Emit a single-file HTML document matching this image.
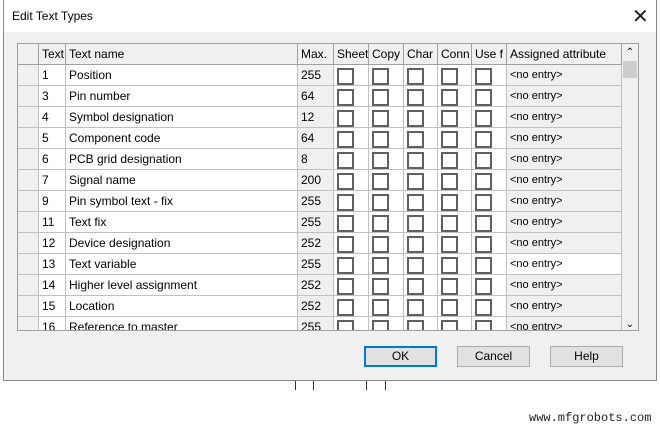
<!DOCTYPE html>
<html><head><style>
body{margin:0;width:660px;height:430px;background:#fff;position:relative;overflow:hidden;font-family:"Liberation Sans",sans-serif;font-size:12px;color:#000}
.dlg{position:absolute;left:3px;top:0;width:652px;height:380px;border:1px solid #888;border-top:none;background:#f0f0f0}
.tb{position:absolute;left:0;top:0;width:652px;height:32px;background:#fff}
.tb span{position:absolute;left:8px;top:9px;font-size:12px}
.x{position:absolute;left:628px;top:4px;font-size:20px;font-weight:100;color:#222;font-family:"DejaVu Sans",sans-serif}
.grid{position:absolute;left:13px;top:43px;width:620px;height:286px;border:1px solid #a0a0a0;background:#fff;overflow:hidden}
.r{position:absolute;left:0;height:21px;width:604px}
.c{position:absolute;top:0;height:20px;border-right:1px solid #c0c0c0;border-bottom:1px solid #c0c0c0;line-height:20px;padding-left:3px;box-sizing:content-box;white-space:nowrap;overflow:hidden}
.h .c{background:#f0f0f0;border-color:#a0a0a0}
.cb{position:absolute;left:3px;top:3px;width:13px;height:13px;border:2px solid #606060}
.sb{position:absolute;left:604px;top:0;width:16px;height:286px;background:#f0f0f0}
.btn{position:absolute;top:346px;width:71px;height:19px;border:1px solid #adadad;background:#e1e1e1;text-align:center;line-height:19px}
.wm{position:absolute;left:529px;top:411px;font-family:"Liberation Mono",monospace;font-size:12px;color:#222}
</style></head><body>
<div class="dlg">
<div class="tb"><span>Edit Text Types</span><div class="x">✕</div></div>
<div class="grid" id="g"></div>
<div class="btn" style="left:360px;border:2px solid #0078d7;height:17px;line-height:17px;width:69px">OK</div>
<div class="btn" style="left:453px">Cancel</div>
<div class="btn" style="left:546px">Help</div>
</div>
<div style="position:absolute;left:295px;top:381px;width:1px;height:9px;background:#333"></div>
<div style="position:absolute;left:313px;top:381px;width:1px;height:9px;background:#333"></div>
<div style="position:absolute;left:366px;top:381px;width:1px;height:9px;background:#333"></div>
<div style="position:absolute;left:385px;top:381px;width:1px;height:9px;background:#333"></div>
<div class="wm">www.mfgrobots.com</div>
<script>
var cols=[[0,21],[21,27],[48,232],[280,36],[316,35],[351,35],[386,34],[420,34],[454,35],[489,115]];
var rows=[["1","Position","255"],["3","Pin number","64"],["4","Symbol designation","12"],["5","Component code","64"],["6","PCB grid designation","8"],["7","Signal name","200"],["9","Pin symbol text - fix","255"],["11","Text fix","255"],["12","Device designation","252"],["13","Text variable","255"],["14","Higher level assignment","252"],["15","Location","252"],["16","Reference to master","255"]];
var h='<div class="r h" style="top:0">';
var hd=["","Text","Text name","Max.","Sheet","Copy","Char","Conn","Use f","Assigned attribute"];
cols.forEach(function(c,i){h+='<div class="c" style="left:'+c[0]+'px;width:'+(c[1]-4)+'px">'+hd[i]+'</div>'});
h+='</div>';
rows.forEach(function(r,j){
 h+='<div class="r" style="top:'+(21+j*21)+'px">';
 cols.forEach(function(c,i){
  var bg='#fff',t='';
  if(i==0)bg='#f0f0f0';
  if(i==1)t=r[0];if(i==2)t=r[1];if(i==3){t=r[2];bg='#f0f0f0'}
  if(i>=4&&i<=8)t='<div class="cb"></div>';
  if(i==9){t='&lt;no entry&gt;';bg=(j==9)?'#fff':'#f0f0f0'}
  h+='<div class="c" style="left:'+c[0]+'px;width:'+(c[1]-4)+'px;background:'+bg+';font-size:'+(i==9?11:12)+'px">'+t+'</div>';
 });
 h+='</div>';
});
h+='<div class="sb"><div style="text-align:center;font-size:10px;height:17px;line-height:17px">&#8963;</div><div style="margin:0 1px;height:17px;background:#cdcdcd"></div><div style="position:absolute;bottom:0;width:16px;text-align:center;font-size:10px">&#8964;</div></div>';
document.getElementById('g').innerHTML=h;
</script>
</body></html>
